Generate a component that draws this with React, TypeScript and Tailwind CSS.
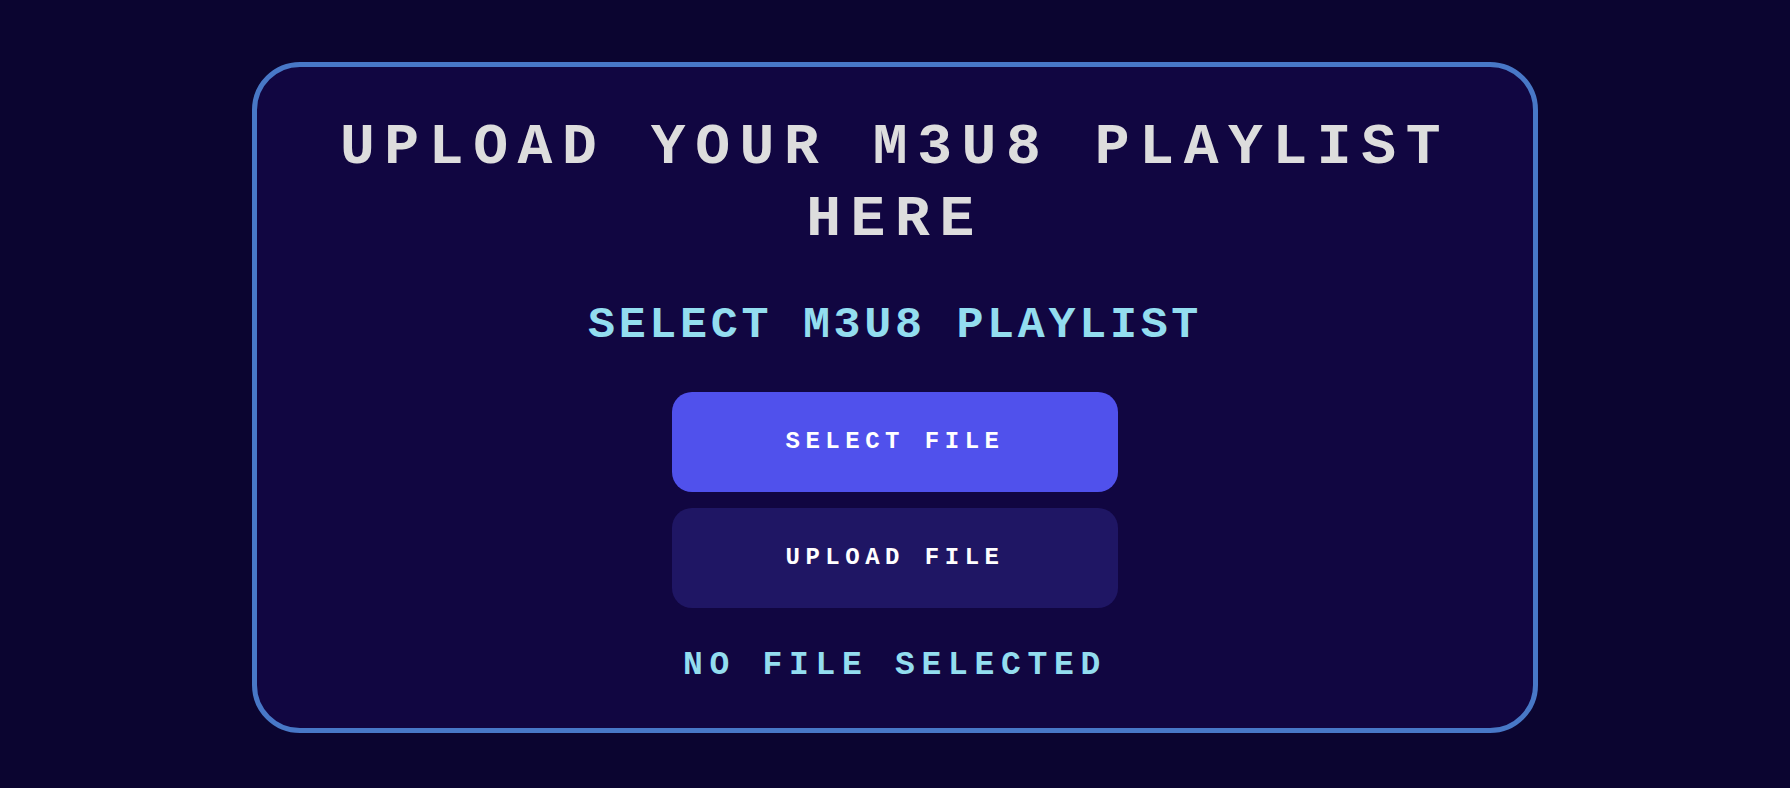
export default function App() {
  return (
    <div className="min-h-screen bg-[#0b0530] pt-[62px] font-['Liberation_Mono',monospace]">
      <div className="mx-auto flex w-[1286px] flex-col items-center rounded-[48px] border-[5px] border-[#4878c7] bg-[#110641] px-[60px] pt-[45px] pb-[42px]">
        <h1 className="text-center text-[58px] font-bold uppercase leading-[72px] tracking-[9.6px] text-[#dddddd]">
          Upload your M3U8 playlist here
        </h1>
        <h2 className="mt-[43px] text-[45px] font-bold uppercase leading-[54px] tracking-[3.7px] text-[#93ddef]">
          Select M3U8 playlist
        </h2>
        <div className="mt-[39px] flex flex-col gap-4">
          <button className="h-[100px] w-[446px] rounded-[20px] bg-[#5051ec] text-[24px] font-bold uppercase tracking-[5.5px] text-white">
            Select file
          </button>
          <button className="h-[100px] w-[446px] rounded-[20px] bg-[#1f1664] text-[24px] font-bold uppercase tracking-[5.5px] text-white">
            Upload file
          </button>
        </div>
        <p className="mt-[38px] text-[33px] font-bold uppercase leading-[40px] tracking-[6.7px] text-[#93ddef]">
          No file selected
        </p>
      </div>
    </div>
  );
}
